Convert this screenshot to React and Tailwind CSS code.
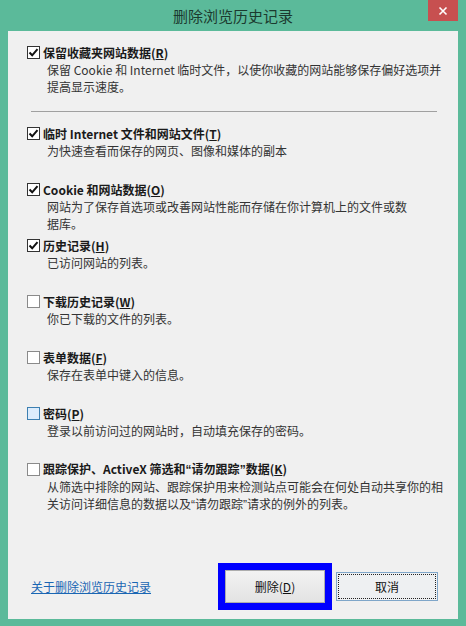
const FONT = { fontFamily: '"Noto Sans CJK SC", "Noto Sans", sans-serif' };

const ITEMS = [
  { label: '临时 Internet 文件和网站文件', key: 'T', checked: true, desc: ['为快速查看而保存的网页、图像和媒体的副本'] },
  { label: 'Cookie 和网站数据', key: 'O', checked: true, desc: ['网站为了保存首选项或改善网站性能而存储在你计算机上的文件或数', '据库。'] },
  { label: '历史记录', key: 'H', checked: true, desc: ['已访问网站的列表。'] },
  { label: '下载历史记录', key: 'W', checked: false, desc: ['你已下载的文件的列表。'] },
  { label: '表单数据', key: 'F', checked: false, desc: ['保存在表单中键入的信息。'] },
  { label: '密码', key: 'P', checked: false, hover: true, desc: ['登录以前访问过的网站时，自动填充保存的密码。'] },
  { label: '跟踪保护、ActiveX 筛选和“请勿跟踪”数据', key: 'K', checked: false, desc: ['从筛选中排除的网站、跟踪保护用来检测站点可能会在何处自动共享你的相', '关访问详细信息的数据以及“请勿跟踪”请求的例外的列表。'] },
];

// curly quotes are narrow in the original, render them with a latin font
function Txt({ children }) {
  return children.split(/([“”])/).map((part, i) =>
    part === '“' || part === '”'
      ? <span key={i} className="font-['Liberation_Sans']">{part}</span>
      : part
  );
}

function Check({ checked, hover }) {
  const box = checked
    ? 'border-[#333333] bg-white'
    : hover
      ? 'border-[#3c7fb1] bg-[#dcecfc]'
      : 'border-[#8a8a8a] bg-white';
  return (
    <div className={`w-[13px] h-[13px] border flex-shrink-0 flex items-center justify-center ${box}`}>
      {checked && (
        <svg width="11" height="11" viewBox="0 0 11 11">
          <path d="M1.5 5.5 L4.2 8.3 L9.5 2.2" fill="none" stroke="#111" strokeWidth="2" />
        </svg>
      )}
    </div>
  );
}

function Option({ label, keyChar, checked, hover, desc }) {
  return (
    <div>
      <div className="flex items-center h-[17px]">
        <Check checked={checked} hover={hover} />
        <span className="ml-[3px] text-[12px] font-bold text-[#1a1a1a] leading-[17px]">
          <Txt>{label}</Txt>(<span className="underline">{keyChar}</span>)
        </span>
      </div>
      {desc.map((d) => (
        <p key={d} className="pl-[20px] text-[12px] leading-[17px] text-[#333333] whitespace-nowrap"><Txt>{d}</Txt></p>
      ))}
    </div>
  );
}

export default function App() {
  return (
    <div className="w-[466px] h-[626px] bg-[#5bba9a] flex flex-col" style={FONT}>
      {/* Title bar */}
      <div className="relative h-[31px] flex items-center justify-center">
        <span className="text-[15px] text-[#1b3a2f] mt-[1px]">删除浏览历史记录</span>
        <div className="absolute top-0 right-[8px] w-[30px] h-[21px] bg-[#c75050] flex items-center justify-center">
          <svg width="10" height="10" viewBox="0 0 10 10">
            <path d="M1.5 1.5 L8.5 8.5 M8.5 1.5 L1.5 8.5" stroke="#fff" strokeWidth="1.6" />
          </svg>
        </div>
      </div>

      {/* Panel */}
      <div className="mx-[8px] mb-[7px] flex-1 bg-[#f0f0f0] flex flex-col">
        <div className="pl-[19px] pt-[13px]">
          <Option
            label="保留收藏夹网站数据"
            keyChar="R"
            checked
            desc={['保留 Cookie 和 Internet 临时文件，以使你收藏的网站能够保存偏好选项并', '提高显示速度。']}
          />
        </div>
        <div className="ml-[23px] w-[406px] h-px bg-[#a0a0a0] mt-[16px] mb-[13px]" />
        <div className="pl-[19px] flex flex-col">
          {ITEMS.map((it) => (
            <div key={it.key} className="h-[56px]">
              <Option label={it.label} keyChar={it.key} checked={it.checked} hover={it.hover} desc={it.desc} />
            </div>
          ))}
        </div>

        {/* Footer */}
        <div className="mt-auto mb-[9px] h-[47px] flex items-center pl-[23px] pr-[20px]">
          <a className="text-[12px] text-[#1a66b3] underline">关于删除浏览历史记录</a>
          <div className="flex-1" />
          <div className="w-[114px] h-[47px] bg-[#0000ff] p-[7px] flex">
            <div className="flex-1 border border-[#adadad] bg-gradient-to-b from-[#f2f2f2] to-[#e3e3e3] flex items-center justify-center text-[12px] text-[#111]">
              删除(<span className="underline">D</span>)
            </div>
          </div>
          <div className="ml-[4px] w-[102px] h-[29px] border border-[#7fa6c9] bg-[#eef0f2] p-[1px] flex">
            <div className="flex-1 border border-dotted border-[#222] flex items-center justify-center text-[12px] text-[#111]">
              取消
            </div>
          </div>
        </div>
      </div>
    </div>
  );
}
